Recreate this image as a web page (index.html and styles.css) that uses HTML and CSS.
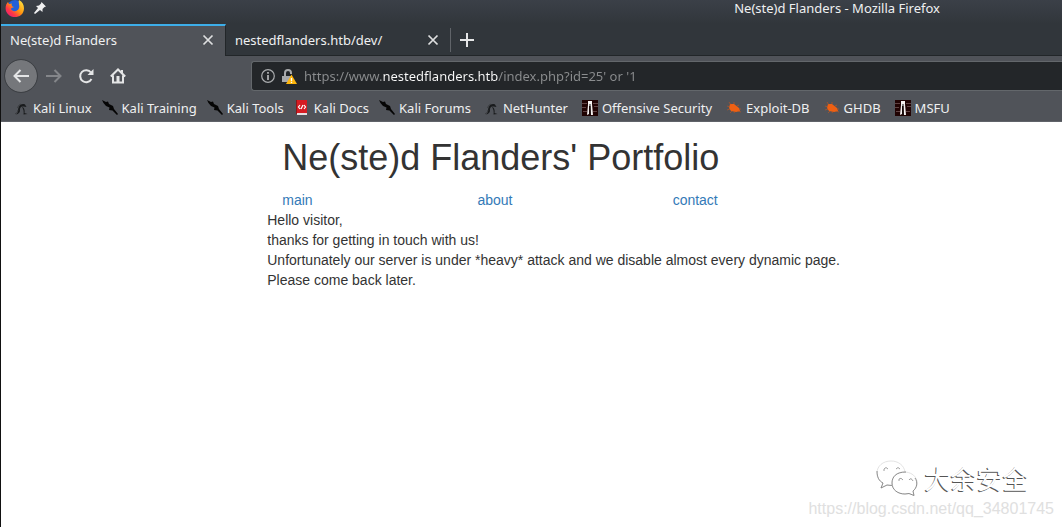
FILE: index.html
```
<!DOCTYPE html>
<html lang="en">
<head>
<meta charset="utf-8">
<title>Ne(ste)d Flanders</title>
<link rel="stylesheet" href="styles.css">
</head>
<body>
<svg class="defs" aria-hidden="true">
  <symbol id="dragon" viewBox="0 0 16 16"><path d="M3 14.5C5.500 13 4.500 9 6 6.500C7.500 4 10 3.500 12 4.500L13.500 7L10.500 6.500C8 6 6.500 8 7 10.500C7 12.500 5.500 14 3 14.500ZM9 7C11.500 7.500 12 11 11.500 13L14.500 14L10.500 14.500C11 12 10.500 9 9 7Z" fill="#191b1d"/><path d="M2 14Q5 13 5 10M8 4Q5 5 4.500 8" fill="none" stroke="#3a3c3f"/></symbol>
  <symbol id="kali" viewBox="0 0 16 16"><path d="M0 0L4 2L6 1.500L7 4L11 6L12 9L16 14L15 15L10.500 10.500L7 10L7.500 7.500L4 6L1.500 3Z" fill="#050505"/></symbol>
  <symbol id="bug" viewBox="0 0 16 16"><path d="M4 4L8 4L13 8L14 11L10 12L5 11L3 8Z" fill="#ee6013"/><path d="M5 5L3 2M8 4L8 2M11 6L13 5M4 7L1 6M4 9L1 10M6 11L4 13M9 11L8 13M12 11L15 12M13 9L15 9" stroke="#c9561b" stroke-width=".6"/></symbol>
  <symbol id="offsec" viewBox="0 0 16 16"><path d="M0 0H16V16H0Z" fill="#200303"/><path d="M0 3.500H5M11 3.500H16M0 7.500H4M12 6.500H16M1 11.500H5M11 11.500H15" stroke="#604243"/><path d="M6 1H10V4L11 15H9L8.500 6L7 6V14L5 15L6 5Z" fill="#f5f1f0"/><path d="M8 4V15" stroke="#111"/></symbol>
  <symbol id="cross" viewBox="0 0 12 12"><path d="M1.500 1.500L10.500 10.500M10.500 1.500L1.500 10.500" stroke="#dedfe0" stroke-width="1.700"/></symbol>
</svg>
<div class="window">
  <header class="chrome">
    <div class="titlebar">
      <svg class="firefox" viewBox="0 0 20 20" aria-hidden="true"><defs><linearGradient id="fire" x1="1" y1="0" x2="0" y2="1"><stop stop-color="#fff04a"/><stop offset=".45" stop-color="#ff980e"/><stop offset=".7" stop-color="#ff3647"/><stop offset="1" stop-color="#e31587"/></linearGradient></defs><circle cx="10" cy="9" r="8" fill="#2260d8"/><path d="M14 1C20 4 20.500 12 16 16C11 20 3 18 1 12C0 8 1 5 3 3L4 5L7 4.500C6 6 7 7.500 9 8C8 9 6 8.500 6 10C7 13 13 13 14 9C15 6 13 4 14 1Z" fill="url(#fire)"/></svg>
      <svg class="pin" viewBox="0 0 12 12" aria-hidden="true"><path d="M7.500 0L12 4.500L10.500 5L8.500 7L8.500 10L6 8L1 12L0 11L4 6L2 4L5 3.500L7 1.500Z" fill="#eff0f1"/></svg>
      <span class="caption">Ne(ste)d Flanders - Mozilla Firefox</span>
    </div>
    <div class="tabs">
      <div class="tab active"><span>Ne(ste)d Flanders</span><button class="plain" aria-label="Close tab"><svg class="close"><use href="#cross"/></svg></button></div>
      <div class="tab"><span>nestedflanders.htb/dev/</span><button class="plain" aria-label="Close tab"><svg class="close"><use href="#cross"/></svg></button></div>
      <button class="plain newtab" aria-label="New tab"><svg viewBox="0 0 14 14"><path d="M7 0V14M0 7H14" stroke="#e6e7e8" stroke-width="2"/></svg></button>
    </div>
    <div class="toolbar">
      <div class="actions">
        <button class="plain back" aria-label="Back"><svg viewBox="0 0 16 16"><path d="M16 8H1.500M7.500 2L1.500 8L7.500 14"/></svg></button>
        <button class="plain forward" aria-label="Forward"><svg viewBox="0 0 16 16"><path d="M0 8H14.500M8.500 2L14.500 8L8.500 14"/></svg></button>
        <button class="plain" aria-label="Reload"><svg viewBox="0 0 16 16"><path d="M13 4.500A6 6 0 1 0 13.500 11" /><path d="M15.500 1V7H9.500Z" class="solid"/></svg></button>
        <button class="plain" aria-label="Home"><svg viewBox="0 0 16 16"><path d="M.8 8.500L8 1.500L15.200 8.500M3 7.500V14.500H13V7.500"/><path d="M6.500 8H9.500V14H6.500ZM11 2H13V6H11Z" class="solid"/></svg></button>
      </div>
      <div class="urlbar">
        <svg class="info" viewBox="0 0 14 14" aria-hidden="true"><circle cx="7" cy="7" r="6.300" fill="none" stroke="#aaacae" stroke-width="1.200"/><path d="M7 6V11M7 3V4.800" stroke="#b5b7b8" stroke-width="1.700"/></svg>
        <svg class="lock" viewBox="0 0 15 15" aria-hidden="true"><path d="M3 7V4Q3 1 6 1Q9 1 9 4V5" fill="none" stroke="#a8aaac" stroke-width="2"/><path d="M0 7H9V13H0Z" fill="#a8aaac"/><path d="M9.500 5.500L15 15H4Z" fill="#ffb70e"/><path d="M9.500 9V12M9.500 12.800V14" stroke="#fff" stroke-width="1.300"/></svg>
        <input class="address" type="text" aria-label="Address" spellcheck="false" value="https://www.nestedflanders.htb/index.php?id=25' or '1">
      </div>
    </div>
    <nav class="bookmarks" aria-label="Bookmarks">
      <div class="group">
        <a href="#"><svg><use href="#dragon"/></svg>Kali Linux</a>
        <a href="#"><svg><use href="#kali"/></svg>Kali Training</a>
        <a href="#"><svg><use href="#kali"/></svg>Kali Tools</a>
        <a href="#"><svg viewBox="0 0 16 16"><path d="M2 0H13V13H2Z" fill="#d51c23"/><path d="M2 0H3V14H2Z" fill="#8b171b"/><path d="M3 13H13V15H3Z" fill="#e4dfe2"/><path d="M6 5L4.500 7L6 9M10 5L11.500 7L10 9M9 5L7 9" fill="none" stroke="#fff" stroke-width="1.200"/></svg>Kali Docs</a>
        <a href="#"><svg><use href="#kali"/></svg>Kali Forums</a>
      </div>
      <div class="group tools">
        <a href="#"><svg><use href="#dragon"/></svg>NetHunter</a>
        <a href="#"><svg><use href="#offsec"/></svg>Offensive Security</a>
        <a href="#"><svg><use href="#bug"/></svg>Exploit-DB</a>
        <a href="#"><svg><use href="#bug"/></svg>GHDB</a>
        <a href="#"><svg><use href="#offsec"/></svg>MSFU</a>
      </div>
    </nav>
  </header>
  <main class="page">
    <h1>Ne(ste)d Flanders' Portfolio</h1>
    <nav class="menu" aria-label="Site"><a href="#">main</a><a href="#">about</a><a href="#">contact</a></nav>
    <p>Hello visitor,<br>thanks for getting in touch with us!<br>Unfortunately our server is under *heavy* attack and we disable almost every dynamic page.<br>Please come back later.</p>
  </main>
  <aside class="watermark">
    <div class="brand" lang="zh">
      <svg viewBox="0 0 42 36" aria-hidden="true"><g fill="#fff" stroke="#dcdcdc" stroke-width=".8"><path d="M15 1C7 1 1 6 1 13C1 18 3 21 7 23L5 28L11 25Q14 26 17 25C28 25 30 18 29 12C28 5 22 1 15 1Z"/><path d="M1 11C1 17 3 21 7 23L5 28L11 25L16 25.500" fill="none" stroke="#777"/><path d="M28 12C20 12 16 17 16 23C16 30 22 34 29 34L33 33.500L38 35.500L37 31C45 25 41 12 28 12Z"/><path d="M30 12C20 12 16 17 16 23C16 30 22 34 29 34L33 33.500L38 35.500L37 31C41 28 42 22 39 18" fill="none" stroke="#777"/></g><path d="M8 11V9Q10 6 12 9M20 9Q22 6 24 9M23 21V19Q25 17 27 20M33 20Q35 17 37 21" fill="none" stroke="#888" stroke-width=".8"/></svg>
      <span>大余安全</span>
    </div>
    <div class="source">https://blog.csdn.net/qq_34801745</div>
  </aside>
</div>
</body>
</html>
```
FILE: styles.css
```
* { box-sizing: border-box; }
body { margin: 0; background: #fff; }
.defs { position: absolute; width: 0; height: 0; }
.window { position: relative; min-height: 100vh; border-left: 1px solid #111; }
.chrome {
  font: 13px/18px "Noto Sans", sans-serif;
  color: #eff0f1;
  background: #31363b;
}
.plain {
  display: flex;
  align-items: center;
  justify-content: center;
  padding: 0;
  border: 0;
  background: none;
}
.titlebar {
  display: flex;
  align-items: flex-start;
  gap: 9px;
  height: 24px;
  padding-left: 4px;
  background: linear-gradient(#3b4048, #31363b);
}
.firefox { width: 20px; height: 20px; margin-top: -1px; }
.pin { width: 12px; height: 12px; margin-top: 2px; }
.caption { margin-left: auto; margin-right: 122px; line-height: 16px; }
.tabs { display: flex; height: 32px; border-bottom: 1px solid #222629; }
.tab {
  display: flex;
  align-items: center;
  justify-content: space-between;
  width: 225px;
  padding: 0 12px 0 9px;
}
.tab.active {
  height: 32px;
  padding: 0 11px 2px 9px;
  border-top: 2px solid #3daee9;
  border-right: 1px solid #222629;
  background: #505359;
}
.close { width: 12px; height: 12px; }
.newtab { height: 24px; margin-top: 4px; margin-left: -1px; padding-left: 9px; border-left: 1px solid #606469; }
.newtab svg { width: 14px; height: 14px; }
.toolbar {
  display: flex;
  align-items: center;
  height: 40px;
  padding-left: 4px;
  background: #505359;
}
.actions { display: flex; width: 246px; }
.actions button { width: 32px; height: 32px; }
.actions .back { margin-right: 1px; }
.actions svg { width: 16px; height: 16px; fill: none; stroke: #e4e5e6; stroke-width: 2; }
.actions .solid { fill: #e4e5e6; stroke: none; }
.actions .back { border-radius: 50%; background: #75777b; outline: 1px solid #3d4044; }
.actions .forward { opacity: .35; }
.urlbar {
  display: flex;
  flex: 1;
  align-items: center;
  height: 30px;
  padding-left: 9px;
  border: 1px solid #63676b;
  border-right: 0;
  border-radius: 3px 0 0 3px;
  background: #232629;
}
.info { width: 14px; height: 14px; margin-right: 7px; }
.lock { width: 15px; height: 15px; margin-right: 7px; }
.address {
  flex: 1;
  min-width: 0;
  height: 20px;
  padding: 0;
  border: 0;
  font: inherit;
  color: transparent;
  background: linear-gradient(90deg, #8b8d8f 79px, #fcfcfc 79px, #fcfcfc 194px, #8b8d8f 194px);
  background-clip: text;
}
.bookmarks {
  display: flex;
  gap: 12px;
  height: 26px;
  padding: 3px 0 0 12px;
  border-bottom: 1px solid #606369;
  background: #505359;
  white-space: nowrap;
}
.group { display: flex; gap: 10px; }
.group.tools { gap: 14px; }
.bookmarks a { display: flex; gap: 4px; color: inherit; text-decoration: none; }
.bookmarks svg { width: 16px; height: 16px; margin-top: 1px; }
.page {
  margin: 0 14px 0 25%;
  padding-left: 1px;
  font: 14px/20px "Liberation Sans", Arial, sans-serif;
  color: #333;
}
.page h1 { margin: 0; padding: 16px 15px 12px; font-size: 36px; line-height: 40px; font-weight: 400; }
.page p { margin: 0; }
.menu { display: grid; grid-template-columns: repeat(4, 1fr); }
.menu a { padding-left: 15px; color: #337ab7; text-decoration: none; }
.watermark { position: absolute; right: 8px; bottom: 8px; font-family: "Liberation Sans", Arial, sans-serif; }
.brand { display: flex; align-items: center; gap: 6px; padding-left: 68px; margin-bottom: 3px; }
.brand svg { width: 42px; height: 36px; }
.brand span {
  font: 26px/36px "Noto Sans CJK SC", sans-serif;
  color: #fff;
  text-shadow: -1px 1px 0 #555;
}
.source { font-size: 16px; line-height: 20px; color: #e0e0e0; }
```
